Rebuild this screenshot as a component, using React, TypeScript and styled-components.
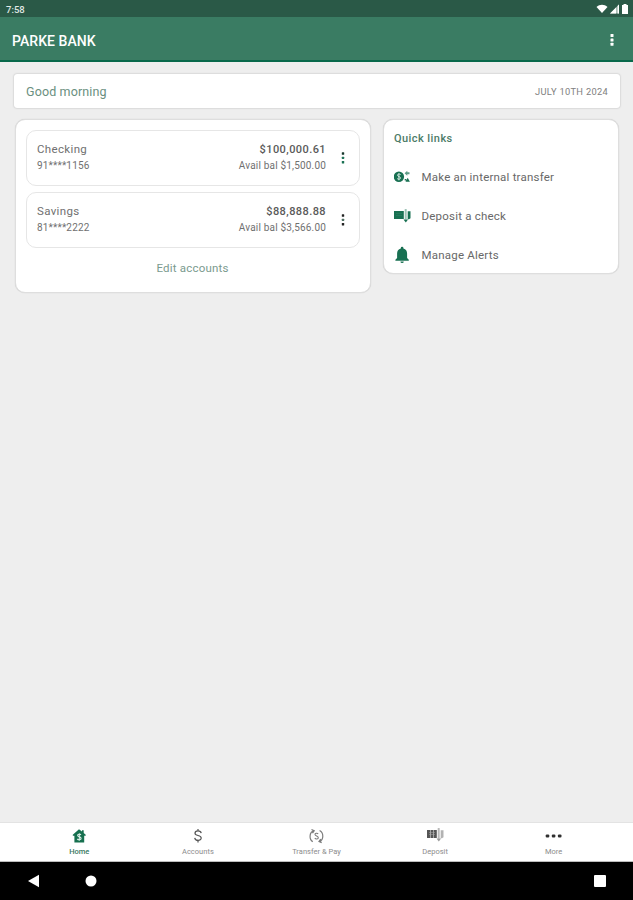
import React from "react";
import styled, { createGlobalStyle } from "styled-components";

const GlobalStyle = createGlobalStyle`
  * { box-sizing: border-box; }
  body { margin: 0; background: #eeeeee; font-family: Roboto, sans-serif; }
`;

const Screen = styled.div`
  width: 633px;
  height: 900px;
  display: flex;
  flex-direction: column;
  background: #eeeeee;
  overflow: hidden;
`;

const StatusBar = styled.div`
  height: 17px;
  flex: none;
  padding: 2px 4px 0 6px;
  display: flex;
  align-items: center;
  justify-content: space-between;
  background: #2a5947;
  color: #e0e9e5;
  font-size: 9.5px;
  font-weight: 500;
`;

const StatusIcons = styled.div`
  display: flex;
  align-items: center;
  gap: 1px;
  margin-top: -1px;
  svg { display: block; }
`;

const AppBar = styled.header`
  height: 45px;
  flex: none;
  padding: 3px 18px 0 12px;
  display: flex;
  align-items: center;
  justify-content: space-between;
  background: #3a7c63;
  border-bottom: 2px solid #08694b;
`;

const Title = styled.h1`
  margin: 1px 0 0;
  color: #ffffff;
  font-size: 14px;
  line-height: 18px;
  font-weight: 500;
  letter-spacing: 0.06px;
`;

const Content = styled.main`
  flex: 1;
  padding: 12px 13px 0 14px;
`;

const Greeting = styled.section`
  height: 34px;
  padding: 0 12px;
  display: flex;
  align-items: center;
  justify-content: space-between;
  background: #ffffff;
  border-radius: 3px;
  box-shadow: 0 0 2px rgba(0, 0, 0, 0.28);
`;

const GreetingText = styled.span`
  color: #6a8f80;
  font-size: 12.5px;
  letter-spacing: 0.13px;
`;

const DateText = styled.span`
  color: #808080;
  font-size: 9.3px;
  letter-spacing: 0.3px;
`;

const Columns = styled.div`
  margin: 11px 1px 0;
  display: flex;
  align-items: flex-start;
  justify-content: space-between;
`;

const Card = styled.section<{ $width: number; $height: number }>`
  width: ${(p) => p.$width}px;
  height: ${(p) => p.$height}px;
  background: #ffffff;
  border: 1px solid #dedede;
  border-radius: 10px;
  box-shadow: 0 0 1px rgba(0, 0, 0, 0.2);
`;

const AccountList = styled.div`
  padding: 10px 10px 0;
  display: flex;
  flex-direction: column;
  gap: 6px;
`;

const AccountRow = styled.article`
  height: 56px;
  padding: 0 13px 0 10px;
  display: flex;
  align-items: center;
  border: 1.5px solid #e6e6e6;
  border-radius: 10px;
`;

const AccountColumn = styled.div<{ $end?: boolean }>`
  flex: ${(p) => (p.$end ? "none" : 1)};
  display: flex;
  flex-direction: column;
  align-items: ${(p) => (p.$end ? "flex-end" : "flex-start")};
  color: #707070;
  margin-top: -1px;
`;

const AccountName = styled.span`
  font-size: 11.5px;
  line-height: 17px;
  letter-spacing: 0.35px;
`;

const AccountNumber = styled.span`
  font-size: 10px;
  line-height: 16px;
  letter-spacing: 0.15px;
`;

const Balance = styled.span`
  color: #5a5a5a;
  font-size: 11px;
  line-height: 17px;
  font-weight: 500;
  letter-spacing: 0.42px;
`;

const Available = styled.span`
  font-size: 10px;
  line-height: 16px;
  letter-spacing: 0.18px;
`;

const RowMenu = styled.div`
  margin-left: 14px;
  width: 6px;
  svg { display: block; }
`;

const EditLink = styled.div`
  margin-top: 11px;
  padding-right: 1px;
  text-align: center;
  color: #7a9a8e;
  font-size: 11.5px;
  line-height: 18px;
  letter-spacing: 0.2px;
`;

const LinksTitle = styled.h2`
  margin: 10px 0 0 10px;
  color: #4d7c68;
  font-size: 11px;
  line-height: 17px;
  font-weight: 500;
  letter-spacing: 0.44px;
`;

const LinkList = styled.div`
  margin-top: 10px;
  padding-left: 10px;
`;

const LinkRow = styled.div`
  height: 39.3px;
  display: flex;
  align-items: center;
  gap: 10.5px;
  color: #686868;
  font-size: 11.5px;
  letter-spacing: 0.21px;
  svg { display: block; color: #187052; }
`;

const TabBar = styled.nav`
  height: 40px;
  flex: none;
  padding: 0 20px;
  display: flex;
  background: #ffffff;
  border-top: 1px solid #e3e3e3;
  border-bottom: 1px solid #bdbdbd;
`;

const Tab = styled.div<{ $active?: boolean }>`
  flex: 1;
  padding-top: 4px;
  display: flex;
  flex-direction: column;
  align-items: center;
  color: ${(p) => (p.$active ? "#16704f" : "#555555")};
  svg { display: block; }
`;

const TabLabel = styled.span<{ $active?: boolean }>`
  margin-top: 2px;
  color: ${(p) => (p.$active ? "#397961" : "#8c8c8c")};
  font-size: 7.5px;
  line-height: 9px;
  font-weight: ${(p) => (p.$active ? 500 : 400)};
  letter-spacing: 0.02px;
`;

const SystemBar = styled.div`
  height: 38px;
  flex: none;
  padding: 0 27px 0 28px;
  display: flex;
  align-items: center;
  background: #000000;
  svg { display: block; }
`;

const BackIcon = styled.svg`
  margin-right: 44.5px;
`;

const RecentIcon = styled.svg`
  margin-left: auto;
`;

const Wifi = () => (
  <svg width="12" height="10" viewBox="0 0 12 10" fill="#fff">
    <path d="M.5 3C3.7.1 8.3.1 11.500 3L6 9z" />
  </svg>
);

const Signal = () => (
  <svg width="11" height="10" viewBox="0 0 11 10">
    <path d="M1 9.500 10 .5v9z" fill="#a9bdb5" />
    <path d="M1 9.500 7 3.500v6zM8.700 1.800 10 .5v9H8.700z" fill="#fff" />
  </svg>
);

const Battery = () => (
  <svg width="8" height="10" viewBox="0 0 8 10" fill="#fff">
    <path d="M2.500 0h3v1H7V10H1V1h1.500z" />
  </svg>
);

const Kebab = ({ colors, dot = 2.4 }: { colors: string[]; dot?: number }) => (
  <svg width="6" height="14" viewBox="0 0 6 14">
    {colors.map((c, i) => (
      <rect key={i} x={3 - dot / 2} y={2.5 + i * 4.4 - dot / 2} width={dot} height={dot} rx=".5" fill={c} />
    ))}
  </svg>
);

const TransferIcon = () => (
  <svg width="17" height="16" viewBox="0 0 17 16" fill="currentColor">
    <circle cx="4.900" cy="7.800" r="5.200" />
    <path d="M6.600 5.600C5.800 4.700 3.400 4.800 3.500 6.300c.1 1.600 3 1 3 2.700 0 1.500-2.400 1.600-3.300.6M4.900 4.300v7" fill="none" stroke="#cfe5dc" strokeWidth="1" />
    <path d="m10.600 4.200 2.700-2.500v1.500h2.200v2h-2.200v1.500z" opacity=".7" />
    <path d="M10.700 9.900h1.600v1.700h-1.600zM13.700 8.800l2.200 3.900h-4.400z" />
  </svg>
);

const DepositIcon = ({ muted }: { muted?: boolean }) => (
  <svg width="17" height="15" viewBox="0 0 17 15" fill="currentColor">
    <rect x="0" y="3" width="9.800" height="8" />
    <path d="M2 5.500h6M2 7.500h6" stroke={muted ? "#999" : "#2f7f62"} strokeWidth=".6" />
    {muted && <path d="M3.500 3v8M6.500 3v8" stroke="#aaa" strokeWidth=".9" />}
    <path d="M13.700 3.300h2.800v7l-1.500.9h-1.300z" opacity={muted ? 0.45 : 1} />
    <rect x="10.700" y="1" width="2" height="10.500" rx=".6" opacity=".42" />
    <path d="M9.500 11.500h4.600L11.800 14.400z" opacity={muted ? 0.6 : 1} />
  </svg>
);

const BellIcon = () => (
  <svg width="17" height="18" viewBox="0 0 17 18" fill="currentColor">
    <path d="M6.800 2.600V2a1.300 1.300 0 0 1 2.600 0v.6c2.500.6 3.700 2.500 3.700 4.900v4.600l1.700 1.700v.9H1.400v-.9l1.700-1.700V7.500c0-2.400 1.200-4.300 3.700-4.900zM6.400 15.400h3.400a1.700 1.700 0 0 1-3.400 0z" />
  </svg>
);

const HomeIcon = () => (
  <svg width="16" height="18" viewBox="0 0 16 18">
    <path d="M8 2.300 1.800 7.800v1h1.600v6.700h9.800V8.800h1.500v-1l-2-1.800V3.300h-1.700v1.200z" fill="currentColor" />
    <path d="M10 7.800C9 6.800 6.500 7 6.600 8.500c.1 1.700 3.500 1.100 3.500 2.900 0 1.600-2.700 1.800-3.900.6M8.300 6.200v7.600" fill="none" stroke="#d7ece3" strokeWidth="1.100" />
  </svg>
);

const DollarIcon = () => (
  <svg width="12" height="18" viewBox="0 0 12 18" fill="none" stroke="currentColor" strokeWidth="1.200">
    <path d="M9.200 6.200C8.700 3 3 3.200 3 6.200 3 9.300 9.200 7.700 9.200 11c0 3.200-6 3.300-6.500-.2M6 2v2.200M6 13v2.500" />
  </svg>
);

const SyncIcon = () => (
  <svg width="17" height="18" viewBox="0 0 17 18" fill="none" stroke="#7c7c7c" strokeWidth="1.200">
    <path d="M5.800 3.800C1 5.200 1 12.500 4.800 14.600M3.500 2.500l2.700 1.200-1.700 2.400M11.600 3.500c4.300 2.200 4.300 9.200-.2 10.900M13.700 15.600l-2.700-1.200 1.700-2.400" />
    <path d="M10.200 6.900C9.200 5.800 6.900 6 7 7.500c.1 1.700 3.300 1.400 3.300 3.200 0 1.500-2.500 1.700-3.500.5" strokeWidth="1.100" />
  </svg>
);

const MoreIcon = () => (
  <svg width="18" height="18" viewBox="0 0 18 18" fill="#303030">
    <rect x=".7" y="7.400" width="3.600" height="3.200" rx="1.100" />
    <rect x="6.800" y="7.400" width="3.600" height="3.200" rx="1.100" />
    <rect x="12.900" y="7.400" width="3.600" height="3.200" rx="1.100" />
  </svg>
);

const IconSlot = styled.div`
  height: 18px;
  display: flex;
`;

const accounts = [
  { name: "Checking", number: "91****1156", balance: "$100,000.61", available: "$1,500.00", dots: ["#17372c", "#23775b", "#187052"] },
  { name: "Savings", number: "81****2222", balance: "$88,888.88", available: "$3,566.00", dots: ["#222", "#4f7063", "#222"] },
];

const links = [
  { label: "Make an internal transfer", icon: <TransferIcon /> },
  { label: "Deposit a check", icon: <DepositIcon /> },
  { label: "Manage Alerts", icon: <BellIcon /> },
];

const tabs = [
  { label: "Home", icon: <HomeIcon />, active: true },
  { label: "Accounts", icon: <DollarIcon /> },
  { label: "Transfer & Pay", icon: <SyncIcon /> },
  { label: "Deposit", icon: <DepositIcon muted /> },
  { label: "More", icon: <MoreIcon /> },
];

export default function App() {
  return (
    <Screen>
      <GlobalStyle />
      <StatusBar>
        <span>7:58</span>
        <StatusIcons><Wifi /><Signal /><Battery /></StatusIcons>
      </StatusBar>
      <AppBar>
        <Title>PARKE BANK</Title>
        <Kebab colors={["#fff", "#fff", "#fff"]} dot={3} />
      </AppBar>
      <Content>
        <Greeting>
          <GreetingText>Good morning</GreetingText>
          <DateText>JULY 10TH 2024</DateText>
        </Greeting>
        <Columns>
          <Card $width={356} $height={174}>
            <AccountList>
              {accounts.map((a) => (
                <AccountRow key={a.name}>
                  <AccountColumn>
                    <AccountName>{a.name}</AccountName>
                    <AccountNumber>{a.number}</AccountNumber>
                  </AccountColumn>
                  <AccountColumn $end>
                    <Balance>{a.balance}</Balance>
                    <Available>Avail bal {a.available}</Available>
                  </AccountColumn>
                  <RowMenu><Kebab colors={a.dots} /></RowMenu>
                </AccountRow>
              ))}
            </AccountList>
            <EditLink>Edit accounts</EditLink>
          </Card>
          <Card $width={236} $height={155}>
            <LinksTitle>Quick links</LinksTitle>
            <LinkList>
              {links.map((l) => (
                <LinkRow key={l.label}>{l.icon}<span>{l.label}</span></LinkRow>
              ))}
            </LinkList>
          </Card>
        </Columns>
      </Content>
      <TabBar>
        {tabs.map((t) => (
          <Tab key={t.label} $active={t.active}>
            <IconSlot>{t.icon}</IconSlot>
            <TabLabel $active={t.active}>{t.label}</TabLabel>
          </Tab>
        ))}
      </TabBar>
      <SystemBar>
        <BackIcon width="12" height="14" viewBox="0 0 12 14"><path d="M0 7 11 .8v12.400z" fill="#fff" /></BackIcon>
        <svg width="12" height="12" viewBox="0 0 12 12"><circle cx="6" cy="6" r="5.500" fill="#fff" /></svg>
        <RecentIcon width="12" height="12" viewBox="0 0 12 12"><rect width="12" height="12" rx="1" fill="#fff" /></RecentIcon>
      </SystemBar>
    </Screen>
  );
}
